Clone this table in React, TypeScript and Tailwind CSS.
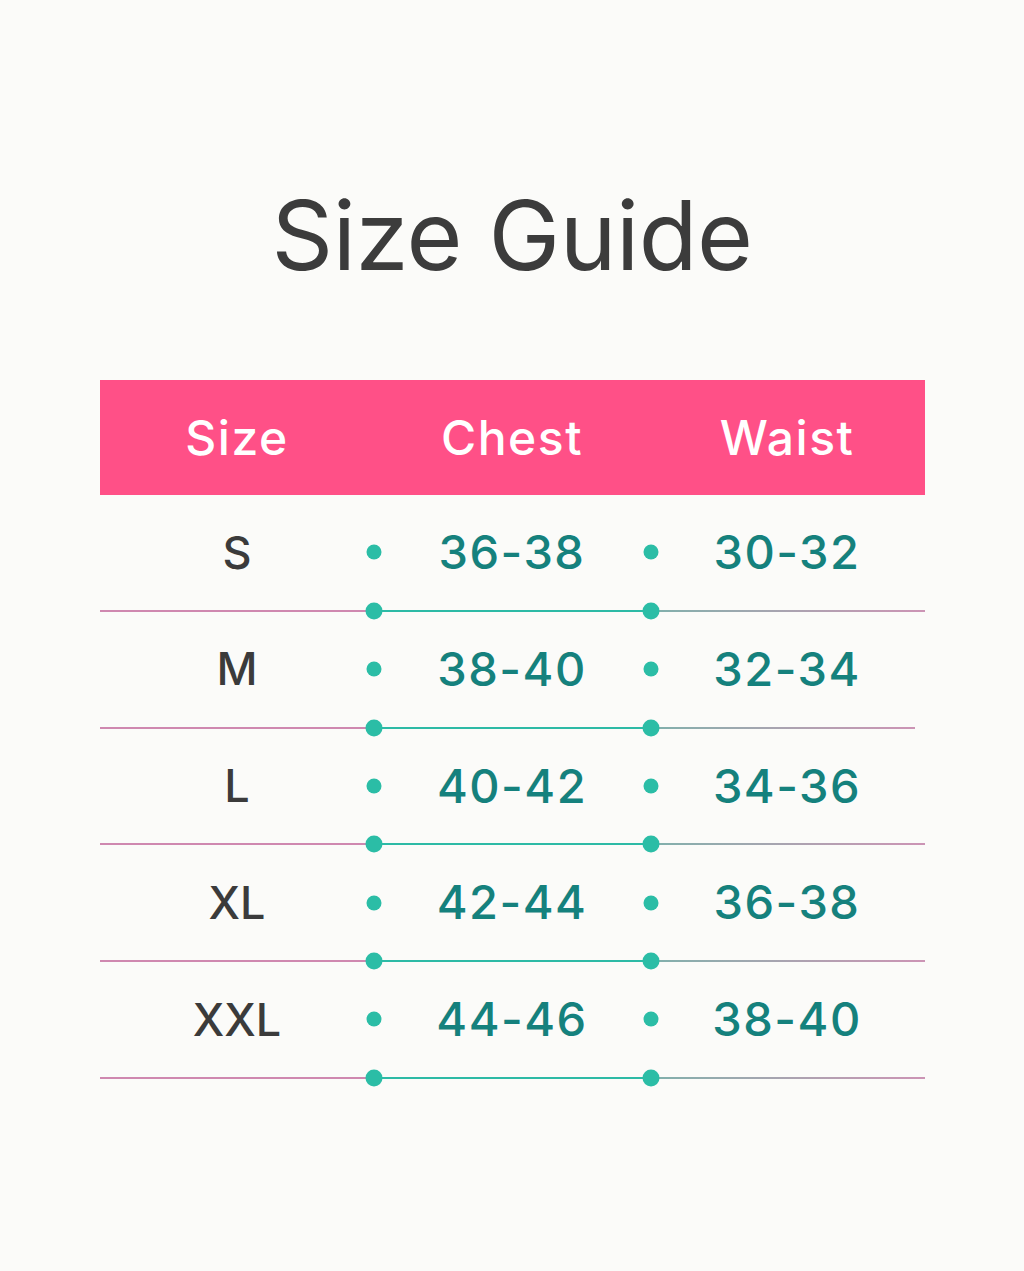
const ROWS = [
  { size: "S", chest: "36-38", waist: "30-32" },
  { size: "M", chest: "38-40", waist: "32-34", short: true },
  { size: "L", chest: "40-42", waist: "34-36" },
  { size: "XL", chest: "42-44", waist: "36-38" },
  { size: "XXL", chest: "44-46", waist: "38-40" },
];

const font = { fontFamily: "Inter, 'Noto Sans', sans-serif" };

export default function App() {
  return (
    <div className="min-h-[1271px] w-full bg-[#fbfbf9] pt-[180px]" style={font}>
      <h1 className="text-center text-[96px] leading-[110px] font-normal tracking-[-0.5px] text-[#3c3c3c]">
        Size Guide
      </h1>

      <div className="mx-auto mt-[90px] w-[825px]">
        {/* Header */}
        <div className="grid h-[115px] grid-cols-3 items-center bg-[#ff5087] text-[48px] font-medium tracking-[1.5px] text-white">
          <div className="text-center">Size</div>
          <div className="text-center">Chest</div>
          <div className="text-center">Waist</div>
        </div>

        {ROWS.map((r) => (
          <div key={r.size}>
            <div className="relative grid h-[114.75px] grid-cols-3 items-center">
              <div className="text-center text-[45px] font-medium text-[#3b3b3b]">{r.size}</div>
              <div className="text-center text-[47px] font-medium tracking-[1.5px] text-[#15817d]">{r.chest}</div>
              <div className="text-center text-[47px] font-medium tracking-[1.5px] text-[#15817d]">{r.waist}</div>
              <span className="absolute left-[274px] top-1/2 h-[15px] w-[15px] -translate-x-1/2 -translate-y-1/2 rounded-full bg-[#2bbda6]" />
              <span className="absolute left-[551px] top-1/2 h-[15px] w-[15px] -translate-x-1/2 -translate-y-1/2 rounded-full bg-[#2bbda6]" />
            </div>
            <div className={`relative flex h-[2px] ${r.short ? "w-[815px]" : "w-full"}`}>
              <div className="w-[274px] bg-[#cf88b0]" />
              <div className="w-[277px] bg-[#2dbaa6]" />
              <div className="flex-1 bg-gradient-to-r from-[#7fb0ac] to-[#cc94b5]" />
              <span className="absolute left-[274px] top-1/2 h-[17px] w-[17px] -translate-x-1/2 -translate-y-1/2 rounded-full bg-[#2bbda6]" />
              <span className="absolute left-[551px] top-1/2 h-[17px] w-[17px] -translate-x-1/2 -translate-y-1/2 rounded-full bg-[#2bbda6]" />
            </div>
          </div>
        ))}
      </div>
    </div>
  );
}
